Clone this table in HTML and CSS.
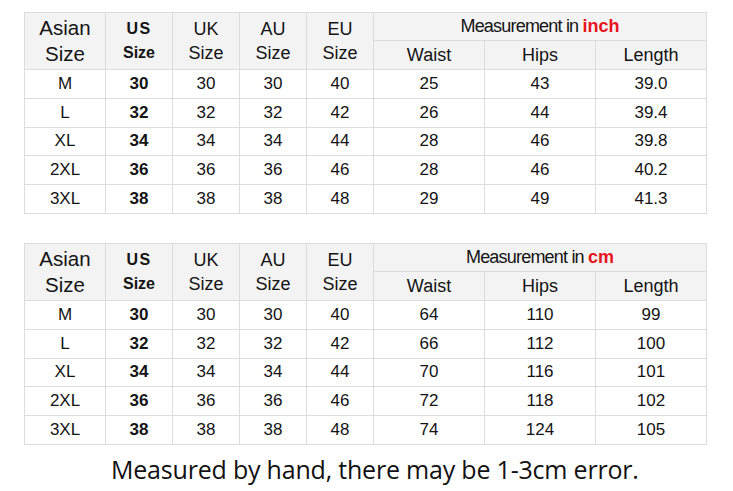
FILE: index.html
```html
<!DOCTYPE html>
<html>
<head>
<meta charset="utf-8">
<link rel="stylesheet" href="styles.css">
</head>
<body>
<div class="page">
  <table class="chart">
    <colgroup>
      <col class="c-asian"><col class="c-s"><col class="c-s"><col class="c-s"><col class="c-s">
      <col class="c-m"><col class="c-m"><col class="c-m">
    </colgroup>
    <tr class="h1">
      <th rowspan="2" class="big">Asian<br>Size</th>
      <th rowspan="2" class="us"><span class="usl">US</span><br>Size</th>
      <th rowspan="2">UK<br>Size</th>
      <th rowspan="2">AU<br>Size</th>
      <th rowspan="2">EU<br>Size</th>
      <th colspan="3" class="meas">Measurement in <b class="unit">inch</b></th>
    </tr>
    <tr class="h2"><th>Waist</th><th>Hips</th><th>Length</th></tr>
    <tr><td>M</td><td class="b">30</td><td>30</td><td>30</td><td>40</td><td>25</td><td>43</td><td>39.0</td></tr>
    <tr><td>L</td><td class="b">32</td><td>32</td><td>32</td><td>42</td><td>26</td><td>44</td><td>39.4</td></tr>
    <tr><td>XL</td><td class="b">34</td><td>34</td><td>34</td><td>44</td><td>28</td><td>46</td><td>39.8</td></tr>
    <tr><td>2XL</td><td class="b">36</td><td>36</td><td>36</td><td>46</td><td>28</td><td>46</td><td>40.2</td></tr>
    <tr><td>3XL</td><td class="b">38</td><td>38</td><td>38</td><td>48</td><td>29</td><td>49</td><td>41.3</td></tr>
  </table>

  <table class="chart second">
    <colgroup>
      <col class="c-asian"><col class="c-s"><col class="c-s"><col class="c-s"><col class="c-s">
      <col class="c-m"><col class="c-m"><col class="c-m">
    </colgroup>
    <tr class="h1">
      <th rowspan="2" class="big">Asian<br>Size</th>
      <th rowspan="2" class="us"><span class="usl">US</span><br>Size</th>
      <th rowspan="2">UK<br>Size</th>
      <th rowspan="2">AU<br>Size</th>
      <th rowspan="2">EU<br>Size</th>
      <th colspan="3" class="meas">Measurement in <b class="unit">cm</b></th>
    </tr>
    <tr class="h2"><th>Waist</th><th>Hips</th><th>Length</th></tr>
    <tr><td>M</td><td class="b">30</td><td>30</td><td>30</td><td>40</td><td>64</td><td>110</td><td>99</td></tr>
    <tr><td>L</td><td class="b">32</td><td>32</td><td>32</td><td>42</td><td>66</td><td>112</td><td>100</td></tr>
    <tr><td>XL</td><td class="b">34</td><td>34</td><td>34</td><td>44</td><td>70</td><td>116</td><td>101</td></tr>
    <tr><td>2XL</td><td class="b">36</td><td>36</td><td>36</td><td>46</td><td>72</td><td>118</td><td>102</td></tr>
    <tr><td>3XL</td><td class="b">38</td><td>38</td><td>38</td><td>48</td><td>74</td><td>124</td><td>105</td></tr>
  </table>

  <p class="note">Measured by hand, there may be 1-3cm error.</p>
</div>
</body>
</html>
```

FILE: styles.css
```css
html, body {
  margin: 0;
  padding: 0;
  background: #ffffff;
}
.page {
  width: 733px;
  height: 491px;
  padding: 12px 0 0 24px;
  box-sizing: border-box;
  font-family: "Liberation Sans", Arial, sans-serif;
  color: #141414;
  overflow: hidden;
}
.chart {
  border-collapse: collapse;
  table-layout: fixed;
  width: 682px;
}
.second {
  margin-top: 29px;
}
.c-asian { width: 81px; }
.c-s { width: 67px; }
.c-m { width: 111px; }
.chart th, .chart td {
  border: 1px solid #dcdcdc;
  text-align: center;
  padding: 0;
  font-weight: normal;
}
.chart th {
  background: #f3f3f3;
  font-size: 18px;
  line-height: 24px;
}
.chart td {
  font-size: 17px;
  height: 27.8px;
  line-height: 20px;
}
.chart .h1 th.meas {
  height: 26px;
  font-size: 18px;
  letter-spacing: -0.8px;
  line-height: 20px;
  padding-bottom: 1px;
}
.chart .h2 th {
  height: 28px;
  font-size: 18px;
  line-height: 20px;
}
.chart th.big {
  font-size: 20.5px;
  line-height: 26px;
}
.chart th.us {
  font-weight: bold;
  font-size: 16px;
  line-height: 24px;
}
.usl {
  letter-spacing: 1.5px;
}
.unit {
  color: #e8141c;
  letter-spacing: 0;
  font-weight: bold;
}
.chart td.b {
  font-weight: bold;
}
.note {
  margin: 10px 0 0 87px;
  font-family: "Open Sans", sans-serif;
  font-size: 25px;
  line-height: 28px;
  letter-spacing: -0.2px;
  color: #111;
  white-space: nowrap;
}
```
